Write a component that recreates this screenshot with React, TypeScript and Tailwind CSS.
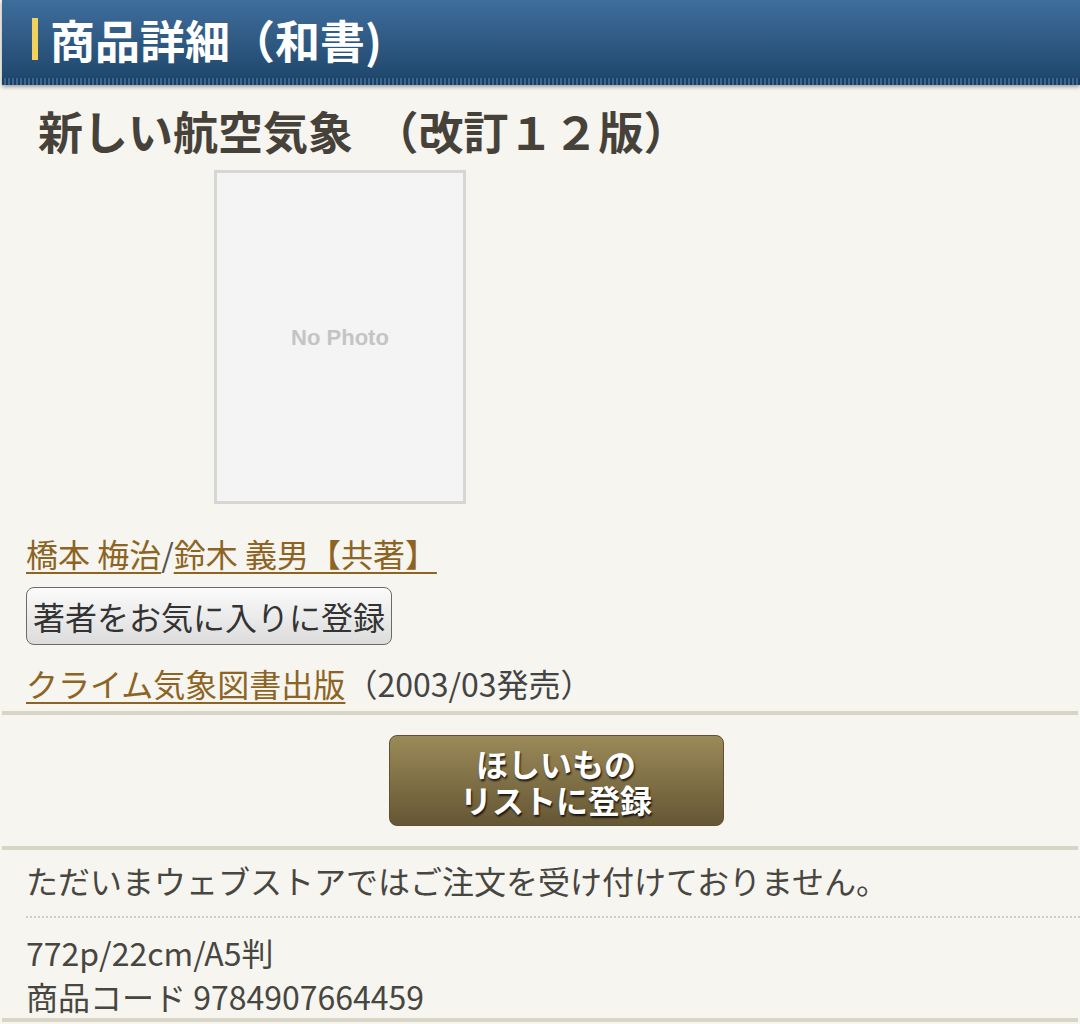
import React from "react";

const jp = "font-['Noto_Sans_CJK_JP','Noto_Sans',sans-serif]";

function Divider() {
  return <div className="mx-[2px] h-[4px] bg-[#d9d5c6]" />;
}

export default function App() {
  return (
    <div className={`${jp} min-h-[1024px] w-[1080px] bg-[#f6f5f0] text-[#444]`}>
      {/* page header */}
      <header className="ml-[2px] shadow-[0_2px_4px_rgba(0,0,0,0.35)]">
        <div className="flex h-[78px] items-center bg-gradient-to-b from-[#3f6e9c] to-[#20486d] pl-[30px]">
          <span className="h-[42px] w-[6px] bg-[#f2d25c]" />
          <h1 className="ml-[12px] text-[45px] font-bold leading-none text-white">
            商品詳細（和書)
          </h1>
        </div>
        <div className="h-[7px] bg-[#23496e] bg-[repeating-linear-gradient(90deg,#1b3f62_0_2px,#3b6893_2px_4px)]" />
      </header>

      {/* title + image */}
      <section className="px-[26px] pt-[20px]">
        <h2 className="pl-[12px] text-[45px] font-bold leading-[52px] text-[#46423a]">
          新しい航空気象&nbsp; （改訂１２版）
        </h2>
        <div className="ml-[188px] mt-[13px] flex h-[334px] w-[252px] items-center justify-center border-[3px] border-[#d6d6d4] bg-[#f4f4f4]">
          <span className="font-['Liberation_Sans',sans-serif] text-[22px] font-bold text-[#c4c4c4]">No Photo</span>
        </div>

        <div className="mt-[29px] text-[32px] leading-[40px]">
          <a className="text-[#8c6423] underline underline-offset-[5px] decoration-[2px]">橋本 梅治</a>
          <span className="text-[#555]">/</span>
          <a className="text-[#8c6423] underline underline-offset-[5px] decoration-[2px]">鈴木 義男【共著】 </a>
        </div>

        <button className="mt-[14px] h-[58px] rounded-[8px] border-[1.5px] border-[#6a6a6a] bg-gradient-to-b from-[#fbfbfb] to-[#dcdcdc] px-[6px] text-[32px] leading-none text-[#333]">
          著者をお気に入りに登録
        </button>

        <div className="mt-[18px] pb-[8px] text-[32px] leading-[40px]">
          <a className="text-[#8c6423] underline underline-offset-[5px] decoration-[2px]">クライム気象図書出版</a>
          <span className="text-[#444]">（2003/03発売）</span>
        </div>
      </section>

      <Divider />

      {/* wish list */}
      <div className="flex justify-center py-[20px]">
        <button className="ml-[32px] flex h-[91px] w-[335px] items-center justify-center rounded-[8px] border border-[#5f5232] bg-gradient-to-b from-[#9b8a58] to-[#665735] text-center text-[32px] font-bold leading-[36px] text-white [text-shadow:1px_2px_2px_rgba(0,0,0,0.8)]">
          <span>
            ほしいもの
            <br />
            リストに登録
          </span>
        </button>
      </div>

      <Divider />

      <section className="pl-[26px] pt-[8px] text-[32px] text-[#484640]">
        <p className="leading-[44px]">ただいまウェブストアではご注文を受け付けておりません。</p>
        <div className="mt-[14px] border-t-2 border-dotted border-[#d2d0ca]" />
        <p className="mt-[12px] leading-[44px]">772p/22cm/A5判</p>
        <p className="leading-[44px]">商品コード 9784907664459</p>
      </section>
      <Divider />
    </div>
  );
}
